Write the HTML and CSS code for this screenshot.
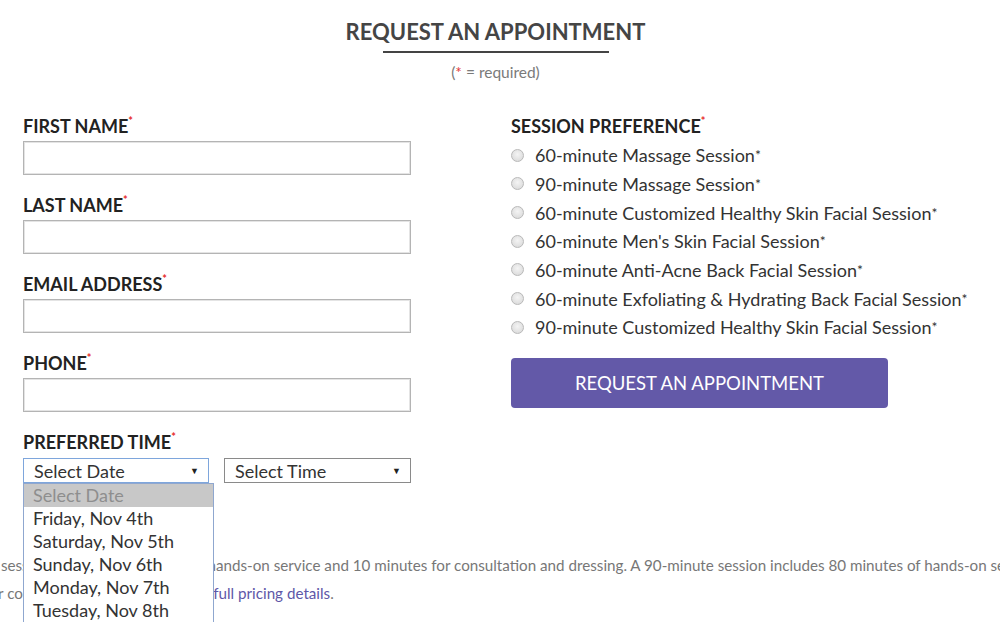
FILE: index.html
```html
<!DOCTYPE html>
<html lang="en">
<head>
    <meta charset="UTF-8">
    <meta name="viewport" content="width=device-width, initial-scale=1.0">
    <title>Request an Appointment</title>
    <link rel="stylesheet" href="styles.css">
</head>
<body>
    <div class="page">
        <div class="header">
            <h1>REQUEST AN APPOINTMENT</h1>
            <div class="rule"></div>
            <p class="required">(<span class="star">*</span> = required)</p>
        </div>

        <form class="form" id="apptForm">
            <div class="col-left">
                <label class="label" for="firstName">FIRST NAME<sup>*</sup></label>
                <input class="field" type="text" id="firstName" name="firstName">

                <label class="label" for="lastName">LAST NAME<sup>*</sup></label>
                <input class="field" type="text" id="lastName" name="lastName">

                <label class="label" for="email">EMAIL ADDRESS<sup>*</sup></label>
                <input class="field" type="text" id="email" name="email">

                <label class="label" for="phone">PHONE<sup>*</sup></label>
                <input class="field" type="text" id="phone" name="phone">

                <div class="label time-label">PREFERRED TIME<sup>*</sup></div>
                <div class="selects">
                    <div class="select-wrap">
                        <div class="select focused">
                            <span>Select Date</span>
                            <span class="arrow">&#9660;</span>
                        </div>
                        <ul class="dropdown">
                            <li class="current">Select Date</li>
                            <li>Friday, Nov 4th</li>
                            <li>Saturday, Nov 5th</li>
                            <li>Sunday, Nov 6th</li>
                            <li>Monday, Nov 7th</li>
                            <li>Tuesday, Nov 8th</li>
                            <li>Wednesday, Nov 9th</li>
                        </ul>
                    </div>
                    <div class="select">
                        <span>Select Time</span>
                        <span class="arrow">&#9660;</span>
                    </div>
                </div>
            </div>

            <div class="col-right">
                <div class="label">SESSION PREFERENCE<sup>*</sup></div>
                <div class="options">
                    <label class="option"><input type="radio" name="session"> 60-minute Massage Session<sup>*</sup></label>
                    <label class="option"><input type="radio" name="session"> 90-minute Massage Session<sup>*</sup></label>
                    <label class="option"><input type="radio" name="session"> 60-minute Customized Healthy Skin Facial Session<sup>*</sup></label>
                    <label class="option"><input type="radio" name="session"> 60-minute Men's Skin Facial Session<sup>*</sup></label>
                    <label class="option"><input type="radio" name="session"> 60-minute Anti-Acne Back Facial Session<sup>*</sup></label>
                    <label class="option"><input type="radio" name="session"> 60-minute Exfoliating &amp; Hydrating Back Facial Session<sup>*</sup></label>
                    <label class="option"><input type="radio" name="session"> 90-minute Customized Healthy Skin Facial Session<sup>*</sup></label>
                </div>
                <button type="submit" class="btn">REQUEST AN APPOINTMENT</button>
            </div>
        </form>

        <div class="note">
            <p>*A 60-minute session includes 50 minutes of hands-on service and 10 minutes for consultation and dressing. A 90-minute session includes 80 minutes of hands-on service and 10 minutes for consultation and dressing.</p>
            <p class="second">Please refer to our complete treatment menus for <a href="#">full pricing details</a>.</p>
        </div>
    </div>
</body>
</html>
```

FILE: styles.css
```css
html {
    overflow: hidden;
}
body {
    margin: 0;
    padding: 0;
    min-height: 622px;
    background: #fff;
    font-family: Lato, "Open Sans", Arial, sans-serif;
    color: #333;
}
.page {
    position: relative;
    padding: 17px 0 0 23px;
}
.header {
    width: 945px;
    text-align: center;
}
.header h1 {
    margin: 0;
    font-size: 22px;
    line-height: 30px;
    font-weight: 700;
    color: #454545;
}
.rule {
    width: 226px;
    height: 2px;
    margin: 4px auto 0;
    background: #444;
}
.required {
    margin: 10px 0 0;
    font-size: 15.5px;
    line-height: 18px;
    color: #7a7a7a;
}
.star {
    color: #e23b3b;
}
.form {
    display: flex;
    margin-top: 34px;
}
.col-left {
    width: 388px;
    display: flex;
    flex-direction: column;
}
.col-right {
    margin-left: 100px;
}
.label {
    display: block;
    font-size: 18px;
    line-height: 22px;
    font-weight: 700;
    color: #222;
    margin-bottom: 4px;
}
.label sup {
    color: #e62c2c;
    font-size: 11px;
    line-height: 0;
    vertical-align: 8px;
}
.field {
    box-sizing: border-box;
    width: 388px;
    height: 34px;
    margin: 0 0 19px;
    border: 1px solid #b4b4b4;
    box-shadow: inset 0 0 0 1px #e4e4e4;
    background: #fff;
    padding: 4px 8px;
    font: inherit;
}
.time-label {
    margin-bottom: 5px;
}
.selects {
    display: flex;
    gap: 15px;
}
.select-wrap {
    position: relative;
}
.select {
    box-sizing: border-box;
    width: 187px;
    height: 25px;
    border: 1px solid #8a8a8a;
    padding: 0 9px 0 10px;
    display: flex;
    justify-content: space-between;
    align-items: center;
    font-size: 18px;
    color: #333;
    background: #fff;
}
.select.focused {
    width: 186px;
    border-color: #7ea6dc;
}
.arrow {
    font-size: 9px;
    color: #222;
}
.dropdown {
    position: absolute;
    left: 0;
    top: 25px;
    box-sizing: border-box;
    width: 191px;
    margin: 0;
    padding: 0;
    list-style: none;
    background: #fff;
    border: 1px solid #8fa7cf;
    font-size: 18px;
    color: #333;
    z-index: 2;
}
.dropdown li {
    height: 23px;
    line-height: 23px;
    padding-left: 9px;
}
.dropdown li.current {
    background: #c8c8c8;
    color: #8e8e8e;
}
.options {
    display: flex;
    flex-direction: column;
    margin-top: 3.7px;
}
.option {
    display: flex;
    align-items: center;
    height: 28.67px;
    font-size: 18px;
    color: #333;
}
.option input {
    appearance: none;
    -webkit-appearance: none;
    width: 13px;
    height: 13px;
    margin: 0 11px 0 0;
    border-radius: 50%;
    border: 1px solid #b9b9b9;
    background: radial-gradient(circle at 50% 40%, #f4f4f4 0%, #d6d6d6 100%);
    box-sizing: border-box;
}
.option sup {
    font-size: 14px;
    line-height: 0;
    vertical-align: 5px;
    color: #333;
}
.btn {
    margin-top: 16.7px;
    width: 377px;
    height: 50px;
    border: none;
    border-radius: 4px;
    background: #6359a8;
    color: #fff;
    font-family: Lato, "Open Sans", Arial, sans-serif;
    font-size: 18.5px;
    cursor: pointer;
}
/* footnote is cut at the left edge in the design, so clip it */
.note {
    margin-top: 73px;
    margin-left: -23px;
    width: 1000px;
    overflow: hidden;
    white-space: nowrap;
    font-size: 15.2px;
    line-height: 18px;
    color: #777;
}
.note p {
    margin: 0 0 10px -92px;
}
.note .second {
    margin-left: -119px;
}
.note a {
    color: #5e57a8;
    text-decoration: none;
}
```
